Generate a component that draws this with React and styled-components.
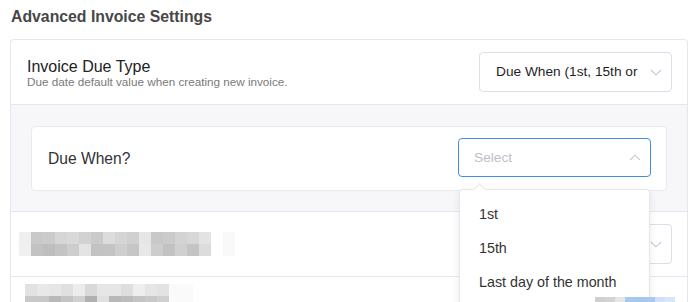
import React from "react";
import styled, { createGlobalStyle } from "styled-components";

const GlobalStyle = createGlobalStyle`
  * { box-sizing: border-box; }
  body {
    margin: 0;
    background: #fff;
    font-family: "Liberation Sans", Arial, sans-serif;
    overflow: hidden;
  }
`;

const blurTop = [
  ["#efefef", "#c9c9c9", "#cbcbcb", "#d6d6d6", "#d9d9d9", "#d2d2d2", "#cacaca", "#dcdcdc", "#d5d5d5", "#d0d0d0", "#e6e6e6", "#c8c8c8", "#cbcbcb", "#d3d3d3", "#d8d8d8", "#e3e3e3", "#fff", "#f9f9f9"],
  ["#f0f0f0", "#c2c2c2", "#bebebe", "#c4c4c4", "#cdcdcd", "#e4e4e4", "#c3c3c3", "#c4c4c4", "#cecece", "#c6c6c6", "#e8e8e8", "#cdcdcd", "#c2c2c2", "#d0d0d0", "#c4c4c4", "#dcdcdc", "#fff", "#f9f9f9"],
];

const blurBottom = [
  ["#e2e2e2", "#e8e8e8", "#e6e6e6", "#e0e0e0", "#ececec", "#d9d9d9", "#e6e6e6", "#e6e6e6", "#dedede", "#eeeeee", "#e6e6e6", "#e3e3e3", "#fafafa", "#fafafa"],
  ["#c8c8c8", "#c8c8c8", "#b8b8b8", "#c4c4c4", "#d0d0d0", "#b0b0b0", "#e0e0e0", "#b8b8b8", "#bcbcbc", "#c4c4c4", "#c8c8c8", "#d0d0d0", "#fafafa", "#fafafa"],
];

const blurCorner = [["#cfcfcf", "#d4d4d4", "#e6e6e6", "#a9c8f0", "#a6c6f0", "#a8c8f0", "#cfe0f8", "#d8e6fa"]];

const Chevron = ({ up }) => (
  <svg width="12" height="7" viewBox="0 0 12 7" fill="none">
    <path
      d={up ? "M1 6L6 1.2L11 6" : "M1 1L6 5.8L11 1"}
      stroke="#c6c8d2"
      strokeWidth="1.1"
    />
  </svg>
);

const Pixels = ({ rows, size = 12 }) => (
  <PixelGrid $cols={rows[0].length} $size={size}>
    {rows.flat().map((c, i) => (
      <Cell key={i} $c={c} />
    ))}
  </PixelGrid>
);

const App = () => {
  return (
    <Page>
      <GlobalStyle />
      <Title>Advanced Invoice Settings</Title>
      <Card>
        <Row>
          <Label>
            <Heading>Invoice Due Type</Heading>
            <Hint>Due date default value when creating new invoice.</Hint>
          </Label>
          <Select>
            <Value>Due When (1st, 15th or last day of the month)</Value>
            <Chevron />
          </Select>
        </Row>
        <Nested>
          <InnerCard>
            <InnerLabel>Due When?</InnerLabel>
            <SelectWrap>
              <Select $focused>
                <Value $placeholder>Select</Value>
                <Chevron up />
              </Select>
              <Menu>
                <Option>1st</Option>
                <Option>15th</Option>
                <Option>Last day of the month</Option>
              </Menu>
            </SelectWrap>
          </InnerCard>
        </Nested>
        <Row $blurred>
          <Pixels rows={blurTop} />
          <Select>
            <Value />
            <Chevron />
          </Select>
        </Row>
        <LastRow>
          <Pixels rows={blurBottom} />
        </LastRow>
      </Card>
      <CornerBlur>
        <Pixels rows={blurCorner} size={10} />
      </CornerBlur>
    </Page>
  );
};

export default App;

const Page = styled.div`
  position: relative;
  width: 695px;
  height: 302px;
  padding: 8px 7px 0 10px;
  overflow: hidden;
`;

const Title = styled.h2`
  margin: 0 0 13px 1px;
  font-size: 15.8px;
  line-height: 18px;
  font-weight: bold;
  color: #474747;
`;

const Card = styled.div`
  width: 678px;
  border: 1px solid #e6e6f0;
  border-bottom: none;
  border-radius: 4px 4px 0 0;
`;

const Row = styled.div`
  display: flex;
  align-items: center;
  justify-content: space-between;
  height: 65px;
  padding: 0 15px 0 ${(p) => (p.$blurred ? "8px" : "16px")};
  border-bottom: 1px solid #e6e6f0;
`;

const Label = styled.div`
  display: flex;
  flex-direction: column;
  padding-top: 3px;
`;

const Heading = styled.div`
  font-size: 16px;
  line-height: 16px;
  color: #222;
`;

const Hint = styled.div`
  font-size: 11.7px;
  line-height: 13px;
  color: #7a7a7a;
`;

const Select = styled.div`
  display: flex;
  align-items: center;
  gap: 3px;
  width: 193px;
  height: ${(p) => (p.$focused ? "39px" : "40px")};
  padding: 0 9px 0 ${(p) => (p.$focused ? "15px" : "16px")};
  background: #fff;
  border: 1px solid ${(p) => (p.$focused ? "#3f8ee6" : "#dedee8")};
  border-radius: 4px;
`;

const Value = styled.span`
  flex: 1;
  height: 18px;
  line-height: 18px;
  overflow: hidden;
  font-size: 13.7px;
  color: ${(p) => (p.$placeholder ? "#bcc0c8" : "#1f1f1f")};
`;

const Nested = styled.div`
  background: #f7f7f9;
  padding: 21px 20px 20px 20px;
  border-bottom: 1px solid #e6e6f0;
`;

const InnerCard = styled.div`
  display: flex;
  align-items: center;
  justify-content: space-between;
  height: 65px;
  padding: 0 15px 0 16px;
  background: #fff;
  border: 1px solid #e9e9f0;
  border-radius: 4px;
`;

const InnerLabel = styled.span`
  font-size: 15.6px;
  color: #333;
`;

const SelectWrap = styled.div`
  position: relative;
  margin-top: -2px;
`;

const Menu = styled.div`
  position: absolute;
  top: 51px;
  left: 1px;
  width: 191px;
  padding: 7px 0;
  background: #fff;
  border: 1px solid #e6e6ec;
  border-radius: 3px;
  box-shadow: 0 2px 8px rgba(0, 0, 0, 0.08);
  z-index: 2;

  &::before {
    content: "";
    position: absolute;
    top: -5px;
    left: 15px;
    width: 8px;
    height: 8px;
    background: #fff;
    border-left: 1px solid #e6e6ec;
    border-top: 1px solid #e6e6ec;
    transform: rotate(45deg);
  }
`;

const Option = styled.div`
  height: 34px;
  line-height: 34px;
  padding-left: 19px;
  font-size: 14.3px;
  color: #333;
`;

const PixelGrid = styled.div`
  display: grid;
  grid-template-columns: repeat(${(p) => p.$cols}, ${(p) => p.$size}px);
  grid-auto-rows: ${(p) => p.$size}px;
`;

const Cell = styled.span`
  background: ${(p) => p.$c};
`;

const LastRow = styled.div`
  display: flex;
  padding: 7px 10px 0 14px;
`;

const CornerBlur = styled.div`
  position: absolute;
  left: 595px;
  top: 297px;
  z-index: 3;
`;
